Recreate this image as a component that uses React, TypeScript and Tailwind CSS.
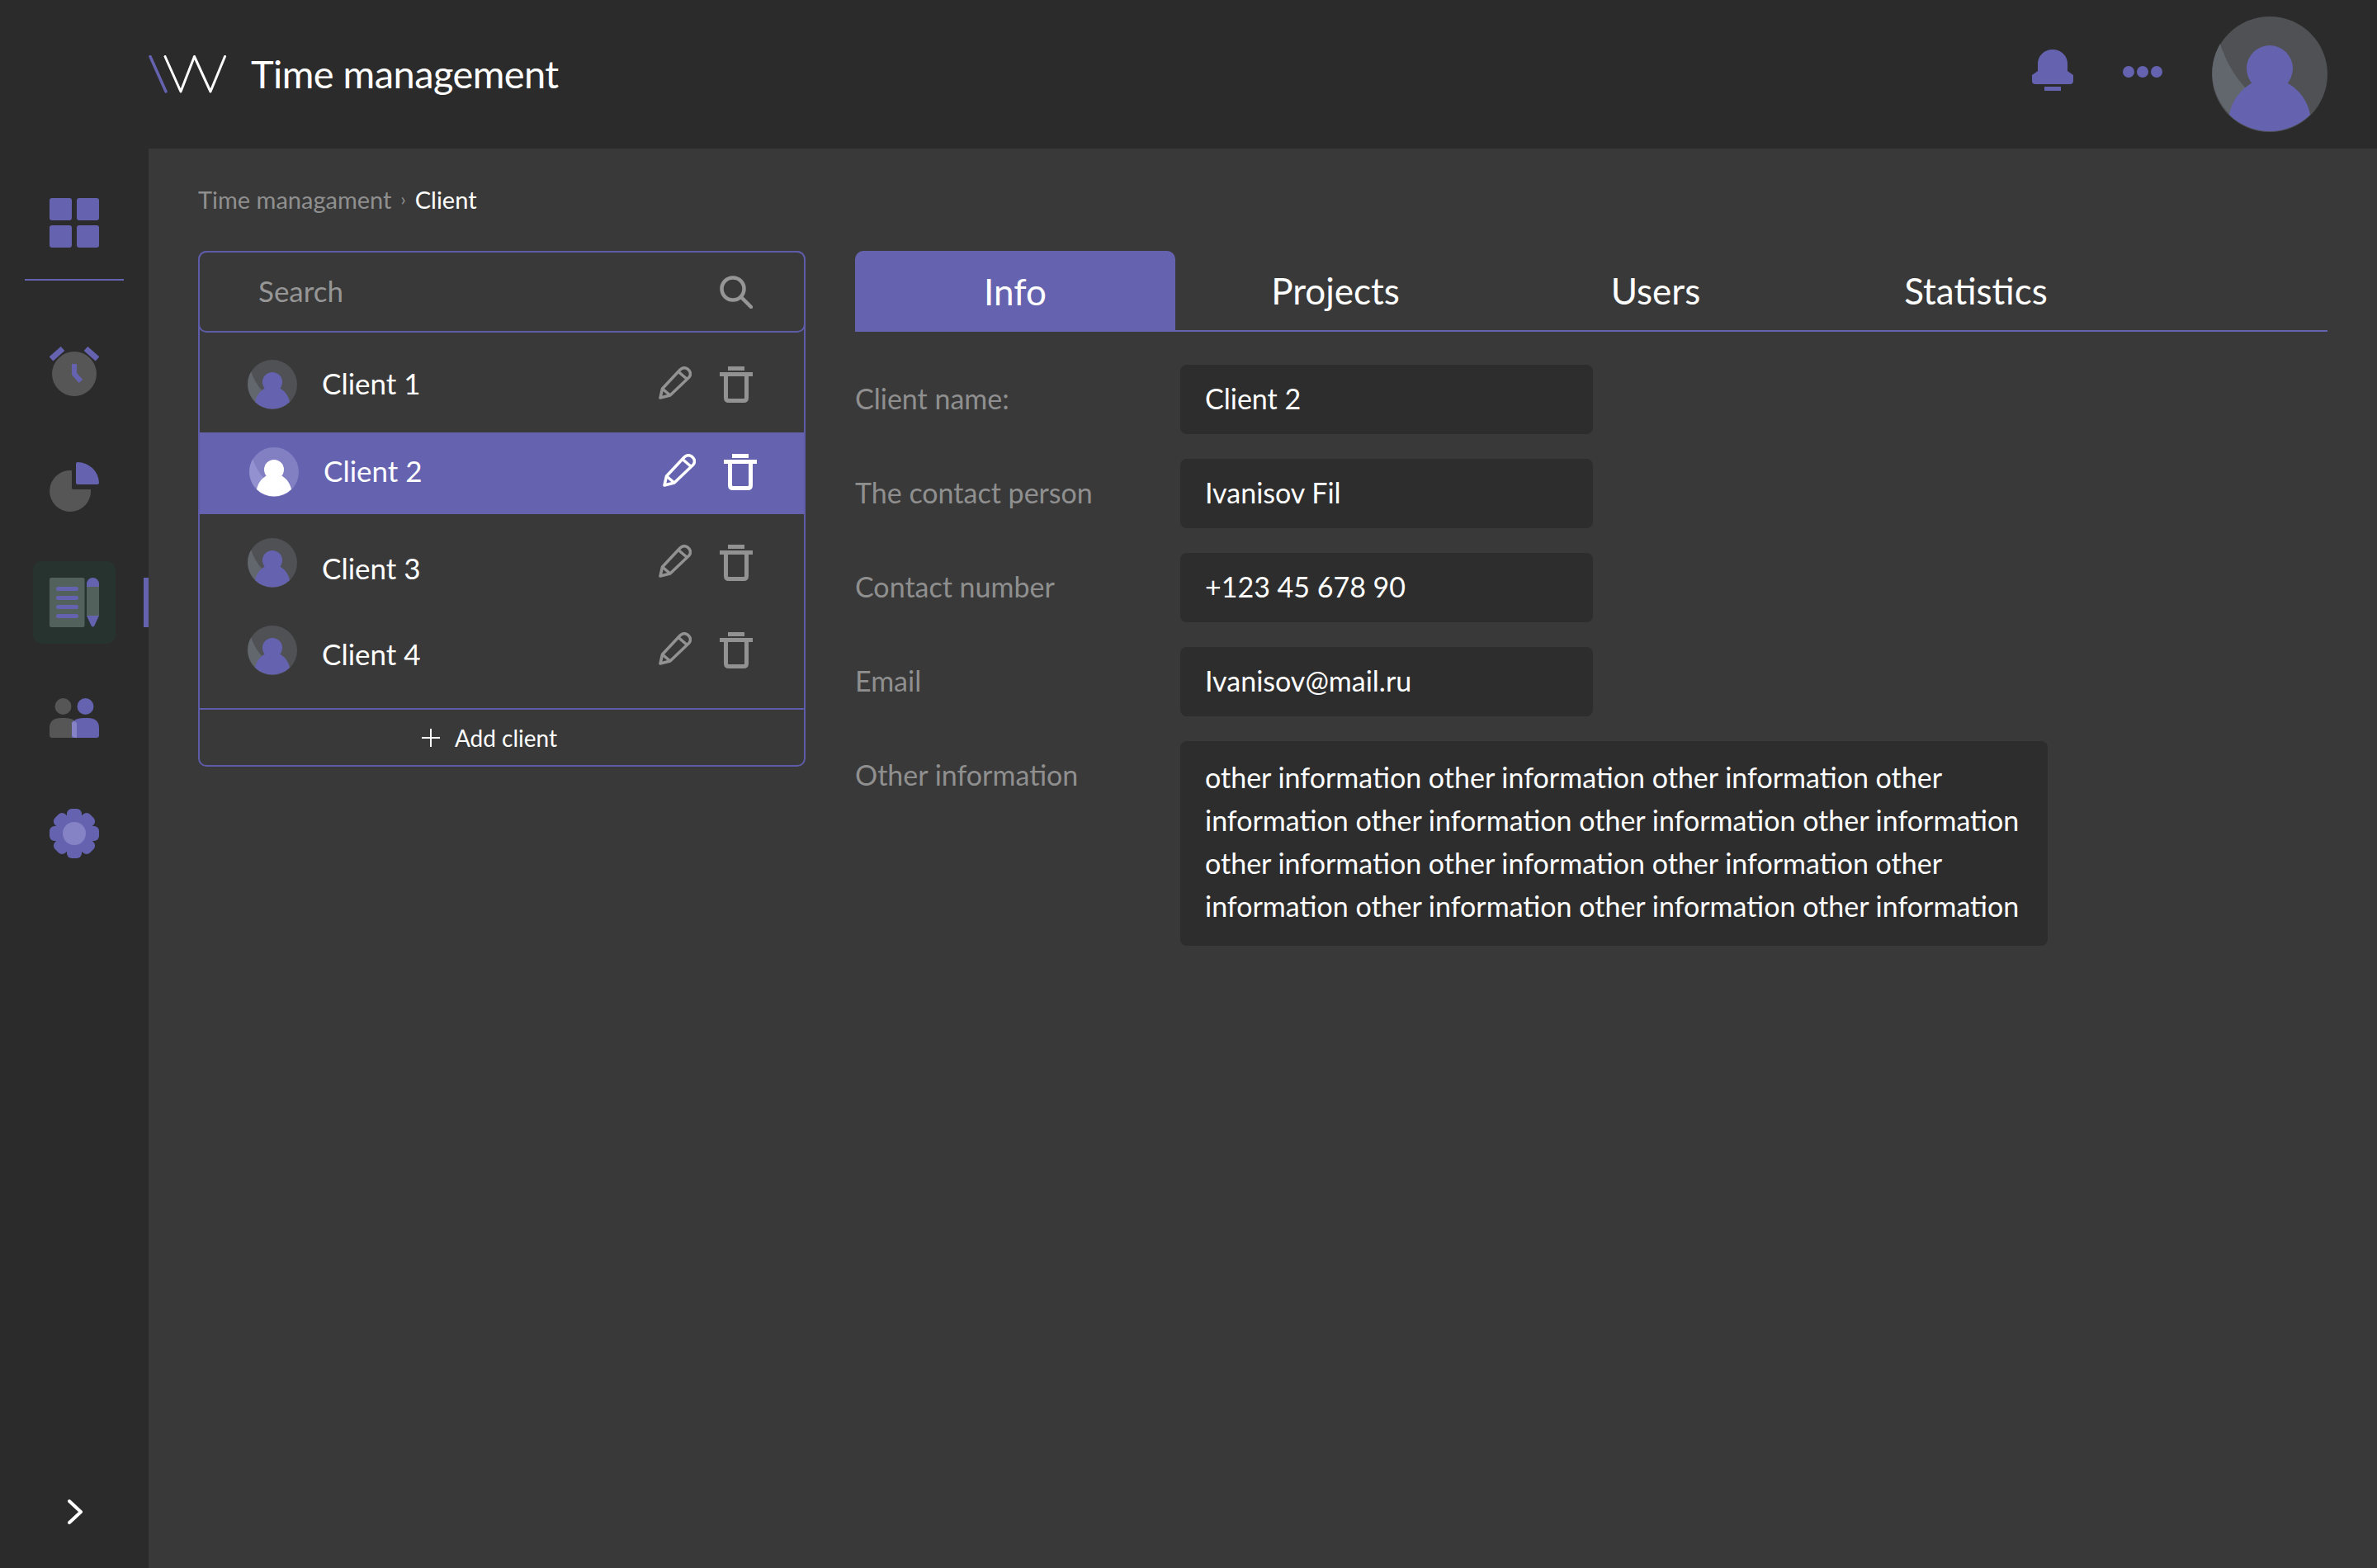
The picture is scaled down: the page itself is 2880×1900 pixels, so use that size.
import React from "react";

const Avatar = ({ active = false, className = "" }: { active?: boolean; className?: string }) => (
  <svg viewBox="0 0 140 140" className={className}>
    <circle cx="70" cy="70" r="70" fill={active ? "#8280c2" : "#4f5155"} />
    <path d="M10 33C17 55 28 73 41 87L22 119A70 70 0 0 1 10 33Z" fill={active ? "#9391cf" : "#62676d"} />
    <circle cx="70" cy="63" r="28" fill={active ? "#ffffff" : "#6563b0"} />
    <path
      d="M21 119C25 97 40 84 55 77L85 77C100 84 115 97 119 119A70 70 0 0 1 21 119Z"
      fill={active ? "#ffffff" : "#6563b0"}
    />
  </svg>
);

const PencilIcon = ({ className = "" }: { className?: string }) => (
  <svg viewBox="0 0 40 40" fill="none" stroke="currentColor" strokeWidth="3.5" strokeLinejoin="round" className={className}>
    <path d="M2 38L4.500 27L26 4Q30 0 35 3L37 5Q40 9 37 13L14 35Z" />
    <path d="M4.500 27L14 35M24 6.500L34.500 15.500" />
  </svg>
);

const TrashIcon = ({ className = "" }: { className?: string }) => (
  <svg viewBox="0 0 40 44" className={className}>
    <rect x="10" y="0" width="20" height="5" fill="currentColor" />
    <rect x="0" y="7" width="40" height="5" fill="currentColor" />
    <path d="M7.500 12V38Q7.500 41.500 11 41.500H29Q32.500 41.500 32.500 38V12" fill="none" stroke="currentColor" strokeWidth="5" />
  </svg>
);

const SidebarIcons = () => (
  <>
    <svg viewBox="0 0 60 60" className="h-[60px] w-[60px]">
      <rect x="0" y="0" width="27" height="27" rx="3" fill="#6563b0" />
      <rect x="33" y="0" width="27" height="27" rx="3" fill="#6563b0" />
      <rect x="0" y="33" width="27" height="27" rx="3" fill="#6563b0" />
      <rect x="33" y="33" width="27" height="27" rx="3" fill="#6563b0" />
    </svg>
    <div className="mt-[38px] h-[2px] w-[120px] bg-[#6563b0]" />
    <svg viewBox="0 0 60 60" className="mt-[80px] h-[60px] w-[60px]">
      <circle cx="30" cy="33" r="27" fill="#565656" />
      <path d="M2 15L16 2.500M44 2.500L58 15" stroke="#6563b0" strokeWidth="7" fill="none" />
      <path d="M30 21V33L38 42" stroke="#6563b0" strokeWidth="6" fill="none" />
    </svg>
    <svg viewBox="0 0 60 60" className="mt-[80px] h-[60px] w-[60px]">
      <path d="M27 10.100A25 25 0 1 0 50 33H29Q27 33 27 31Z" fill="#565656" />
      <path d="M32 2Q32 0 34 0A26 26 0 0 1 60 25Q60 27 58 27H34Q32 27 32 25Z" fill="#6563b0" />
    </svg>
  </>
);

const clients = [
  { name: "Client 1", row: "h-[121px] pt-[33px]", text: "-mt-[2px]" },
  { name: "Client 2", row: "h-[99px] pt-[18px] bg-[#6563b0]", text: "-mt-[2px]", active: true },
  { name: "Client 3", row: "h-[106px] pt-[29px]", text: "mt-[6px]" },
  { name: "Client 4", row: "h-[129px] pt-[29px]", text: "mt-[4px]" },
];

const fields = [
  { label: "Client name:", value: "Client 2" },
  { label: "The contact person", value: "Ivanisov Fil" },
  { label: "Contact number", value: "+123 45 678 90" },
  { label: "Email", value: "Ivanisov@mail.ru" },
];

const tabs = ["Info", "Projects", "Users", "Statistics"];

const App = () => {
  return (
    <div className="flex h-[1900px] w-[2880px] flex-col overflow-hidden bg-[#2b2b2b] font-['Lato',sans-serif] text-white">
      <header className="flex h-[180px] shrink-0 items-center pl-[180px] pr-[60px]">
        <svg viewBox="0 0 94 46" fill="none" strokeWidth="3" strokeLinecap="round" className="h-[46px] w-[94px]">
          <path d="M2 1.500L21 44" stroke="#6563b0" strokeWidth="3.500" />
          <path d="M20 1.500L39 44L55.500 1.500L75 44L92.500 1.500" stroke="#ffffff" strokeLinejoin="round" />
        </svg>
        <span className="mb-[2px] ml-[30px] text-[47px] leading-none tracking-[-0.012em] font-normal">Time management</span>
        <div className="ml-auto flex items-center gap-[60px]">
          <svg viewBox="0 0 50 50" className="mb-[10px] h-[50px] w-[50px]" fill="#6563b0">
            <path d="M7 17A18 17 0 0 1 43 17V26L50 31V38Q50 42 46 42H4Q0 42 0 38V31L7 26Z" />
            <rect x="15" y="45" width="20" height="5" />
          </svg>
          <svg viewBox="0 0 48 14" className="mb-[6px] h-[14px] w-[48px]" fill="#6563b0">
            <circle cx="7" cy="7" r="7" />
            <circle cx="24" cy="7" r="7" />
            <circle cx="41" cy="7" r="7" />
          </svg>
          <Avatar className="h-[140px] w-[140px]" />
        </div>
      </header>

      <div className="flex min-h-0 flex-1">
        <aside className="flex w-[180px] shrink-0 flex-col items-center pt-[60px]">
          <SidebarIcons />
          <div className="relative mt-[60px] flex w-full justify-center">
            <div className="flex h-[100px] w-[100px] items-center justify-center rounded-[10px] bg-[#26332f]">
              <svg viewBox="0 0 60 60" className="h-[60px] w-[60px]">
                <rect x="0" y="0" width="42.500" height="60" rx="2" fill="#52615b" />
                <rect x="8" y="11" width="27" height="5" rx="2.500" fill="#6563b0" />
                <rect x="8" y="22" width="27" height="5" rx="2.500" fill="#6563b0" />
                <rect x="8" y="33" width="27" height="5" rx="2.500" fill="#6563b0" />
                <rect x="8" y="44" width="27" height="5" rx="2.500" fill="#6563b0" />
                <path d="M45 11V7.500A7.500 7.500 0 0 1 60 7.500V11Z" fill="#6563b0" />
                <rect x="45" y="11" width="15" height="35" fill="#52615b" />
                <path d="M45 46H60L54.500 58Q52.500 61 50.500 58Z" fill="#6563b0" />
              </svg>
            </div>
            <div className="absolute right-0 top-[20px] h-[60px] w-[6px] bg-[#6563b0]" />
          </div>
          <svg viewBox="0 0 60 48" className="mt-[66px] h-[48px] w-[60px]">
            <circle cx="16.500" cy="10" r="10" fill="#565656" />
            <circle cx="43.500" cy="10" r="10" fill="#6563b0" />
            <path d="M0 45V36Q0 24 14 24H19Q29 24 33 30V48H3Q0 48 0 45Z" fill="#565656" />
            <path d="M27 48V30Q31 24 41 24H46Q60 24 60 36V45Q60 48 57 48Z" fill="#6563b0" />
            <path d="M33 30Q29 26 27 30V44Q27 48 33 48Z" fill="#8583c6" />
          </svg>
          <svg viewBox="0 0 60 60" className="mt-[86px] h-[60px] w-[60px]" fill="#6563b0">
            <rect x="21" y="0" width="18" height="60" rx="6" />
            <rect x="21" y="0" width="18" height="60" rx="6" transform="rotate(45 30 30)" />
            <rect x="21" y="0" width="18" height="60" rx="6" transform="rotate(90 30 30)" />
            <rect x="21" y="0" width="18" height="60" rx="6" transform="rotate(135 30 30)" />
            <circle cx="30" cy="30" r="22" />
            <circle cx="30" cy="30" r="14" fill="#8583c6" />
          </svg>
          <svg viewBox="0 0 18 30" fill="none" stroke="#ffffff" strokeWidth="4" strokeLinecap="round" strokeLinejoin="round" className="mb-[53px] mt-auto ml-[2px] h-[30px] w-[18px]">
            <path d="M2 2L16 15L2 28" />
          </svg>
        </aside>

        <main className="min-w-0 flex-1 bg-[#393939] pl-[60px] pr-[60px] pt-[44px]">
          <div className="flex h-[34px] items-center text-[29px] leading-none">
            <span className="text-[#8f8f8f]">Time managament</span>
            <span className="mx-[11px] text-[22px] text-[#8f8f8f]">›</span>
            <span>Client</span>
          </div>

          <div className="mt-[46px] flex items-start gap-[60px]">
            <section className="w-[736px] shrink-0 rounded-[10px] border-2 border-[#5e5ca8]">
              <div className="-mx-[2px] -mt-[2px] flex h-[99px] items-center justify-between rounded-[10px] border-2 border-[#5e5ca8] pl-[71px] pr-[62px]">
                <span className="pb-[2px] text-[35px] text-[#969696]">Search</span>
                <svg viewBox="0 0 40 40" fill="none" stroke="#969696" strokeWidth="4.500" strokeLinecap="round" className="h-[40px] w-[40px]">
                  <circle cx="16" cy="16" r="13.500" />
                  <path d="M26 26L38 38" />
                </svg>
              </div>

              {clients.map((c) => (
                <div key={c.name} className={`flex items-start ${c.row} ${c.active ? "pl-[60px] pr-[57px]" : "pl-[58px] pr-[62px]"}`}>
                  <Avatar active={c.active} className="h-[60px] w-[60px] shrink-0" />
                  <span className={`ml-[30px] flex h-[60px] items-center text-[35px] leading-none ${c.text}`}>{c.name}</span>
                  <div className={`ml-auto mt-[8px] flex items-start gap-[34px] ${c.active ? "text-white" : "text-[#929292]"}`}>
                    <PencilIcon className="h-[40px] w-[40px]" />
                    <TrashIcon className="h-[44px] w-[40px]" />
                  </div>
                </div>
              ))}

              <div className="flex h-[69px] items-center justify-center gap-[18px] border-t-2 border-[#5e5ca8] pr-[30px]">
                <svg viewBox="0 0 22 22" stroke="#ffffff" strokeWidth="2" fill="none" className="h-[22px] w-[22px]">
                  <path d="M11 0V22M0 11H22" />
                </svg>
                <span className="text-[28px] leading-none">Add client</span>
              </div>
            </section>

            <section className="min-w-0 flex-1">
              <div className="flex h-[98px] border-b-2 border-[#6563b0]">
                {tabs.map((t, i) => (
                  <div
                    key={t}
                    className={`flex w-[388px] items-center justify-center text-[44px] leading-none ${i === 0 ? "-mb-[2px] rounded-t-[10px] bg-[#6563b0]" : ""}`}
                  >
                    {t}
                  </div>
                ))}
              </div>

              <div className="mt-[40px] flex flex-col gap-[30px]">
                {fields.map((f) => (
                  <div key={f.label} className="flex items-center">
                    <span className="w-[394px] shrink-0 pb-[3px] text-[34px] leading-none text-[#8f8f8f]">{f.label}</span>
                    <div className="flex h-[84px] w-[500px] items-center rounded-[8px] bg-[#2d2d2d] pb-[3px] pl-[30px] text-[34px] leading-none">
                      {f.value}
                    </div>
                  </div>
                ))}
                <div className="flex items-start">
                  <span className="w-[394px] shrink-0 pt-[24px] text-[34px] leading-none text-[#8f8f8f]">Other information</span>
                  <div className="w-[1051px] rounded-[8px] bg-[#2d2d2d] pb-[22px] pl-[30px] pt-[18px] text-[34px] leading-[52px] whitespace-nowrap">
                    other information other information other information other
                    <br />
                    information other information other information other information
                    <br />
                    other information other information other information other
                    <br />
                    information other information other information other information
                  </div>
                </div>
              </div>
            </section>
          </div>
        </main>
      </div>
    </div>
  );
};

export default App;
